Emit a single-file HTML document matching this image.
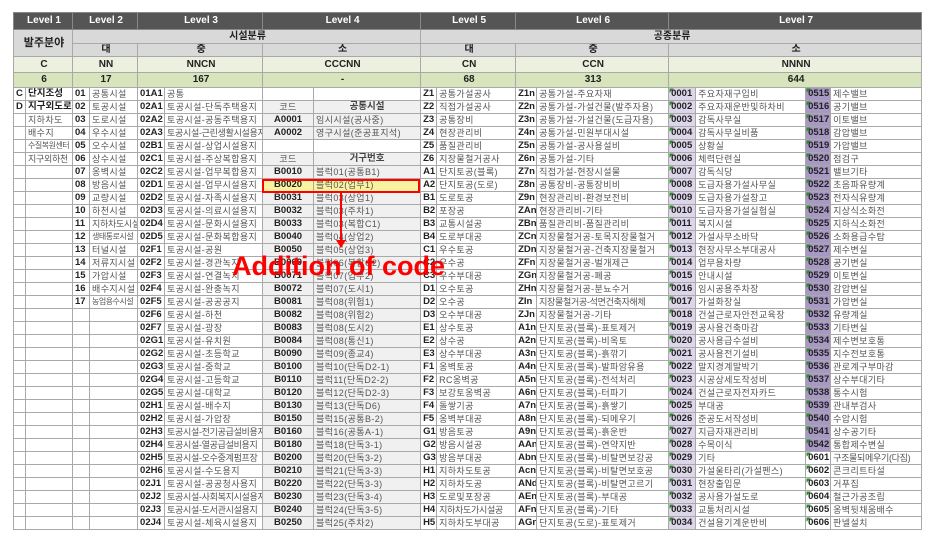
<!DOCTYPE html>
<html><head><meta charset="utf-8"><style>
body{margin:0;background:#fff;width:934px;height:536px;overflow:hidden;position:relative;font-family:"Liberation Sans","Noto Sans CJK KR","NanumGothic",sans-serif}
table{position:absolute;left:13px;top:12px;border-collapse:collapse;table-layout:fixed;width:908px}
td{border:1px solid #a9a9a9;padding:0 0 0 2px;height:12px;font-size:9px;line-height:12px;white-space:nowrap;overflow:hidden;color:#555;letter-spacing:0.4px}
td.c{font-weight:bold;color:#222;letter-spacing:0;font-size:9.5px}
.h td{background:#555;color:#fff;font-weight:bold;text-align:center;height:16px;font-size:10px;border-color:#888;letter-spacing:0}
.g td{background:#d9d9d9;color:#222;font-weight:bold;text-align:center;letter-spacing:0;font-size:10px}
.l td{background:#ebf1de;color:#222;font-weight:bold;text-align:center;height:15px;font-size:10px;letter-spacing:0}
.d td{background:#d7e4bc;color:#222;font-weight:bold;text-align:center;height:14px;font-size:10px;letter-spacing:0}
.L{border-left:1px solid #333!important}
.gy{background:#f0f0f0}
.p1{background:#ddd5ea linear-gradient(135deg,#2a8a2a 3px,transparent 3px)}
.p2{background:#a898c4 linear-gradient(135deg,#2a8a2a 3px,transparent 3px)}
.p0{background:#fff linear-gradient(135deg,#2a8a2a 3px,transparent 3px)}
.ct{text-align:center;padding:0}
.s{letter-spacing:-0.3px}
.bx{position:absolute;left:262px;top:179px;width:154px;height:10px;border:2px solid #f00}
.ar{position:absolute;left:340px;top:193px;width:2px;height:48px;background:#f00}
.ah{position:absolute;left:336px;top:240px;width:0;height:0;border-left:5px solid transparent;border-right:5px solid transparent;border-top:8px solid #f00}
.tx{position:absolute;left:232px;top:253px;font-size:27px;font-weight:bold;color:#f00;line-height:27px;letter-spacing:0}
</style></head><body>
<table>
<colgroup><col style="width:12px"><col style="width:47px"><col style="width:17px"><col style="width:48px"><col style="width:27px"><col style="width:98px"><col style="width:51px"><col style="width:107px"><col style="width:16px"><col style="width:79px"><col style="width:21px"><col style="width:132px"><col style="width:27px"><col style="width:110px"><col style="width:25px"><col style="width:91px"></colgroup>
<tr class="h"><td colspan="2">Level 1</td><td colspan="2">Level 2</td><td colspan="2">Level 3</td><td colspan="2">Level 4</td><td colspan="2">Level 5</td><td colspan="2">Level 6</td><td colspan="4">Level 7</td></tr>
<tr class="g"><td colspan="2" rowspan="2" style="font-size:11px">발주분야</td><td colspan="6" style="height:13px">시설분류</td><td colspan="8">공종분류</td></tr>
<tr class="g"><td colspan="2">대</td><td colspan="2">중</td><td colspan="2">소</td><td colspan="2">대</td><td colspan="2">중</td><td colspan="4">소</td></tr>
<tr class="l"><td colspan="2">C</td><td colspan="2">NN</td><td colspan="2">NNCN</td><td colspan="2">CCCNN</td><td colspan="2">CN</td><td colspan="2">CCN</td><td colspan="4">NNNN</td></tr>
<tr class="d"><td colspan="2">6</td><td colspan="2">17</td><td colspan="2">167</td><td colspan="2">-</td><td colspan="2">68</td><td colspan="2">313</td><td colspan="4">644</td></tr>
<tr><td class="c">C</td><td class="c">단지조성</td><td class="c L">01</td><td>공통시설</td><td class="c L">01A1</td><td>공통</td><td class="L"></td><td></td><td class="c L">Z1</td><td>공통가설공사</td><td class="c L">Z1n</td><td>공통가설-주요자재</td><td class="c L p1">0001</td><td>주요자재구입비</td><td class="c p2">0515</td><td>제수밸브</td></tr>
<tr><td class="c">D</td><td class="c">지구외도로</td><td class="c L">02</td><td>토공시설</td><td class="c L">02A1</td><td>토공시설-단독주택용지</td><td class="L gy ct">코드</td><td class="gy ct c" style="color:#444">공통시설</td><td class="c L">Z2</td><td>직접가설공사</td><td class="c L">Z2n</td><td>공통가설-가설건물(발주자용)</td><td class="c L p1">0002</td><td>주요자재운반및하차비</td><td class="c p2">0516</td><td>공기밸브</td></tr>
<tr><td></td><td>지하차도</td><td class="c L">03</td><td>도로시설</td><td class="c L">02A2</td><td>토공시설-공동주택용지</td><td class="L gy ct c">A0001</td><td class="gy">임시시설(공사중)</td><td class="c L">Z3</td><td>공통장비</td><td class="c L">Z3n</td><td>공통가설-가설건물(도급자용)</td><td class="c L p1">0003</td><td>감독사무실</td><td class="c p2">0517</td><td>이토밸브</td></tr>
<tr><td></td><td>배수지</td><td class="c L">04</td><td>우수시설</td><td class="c L">02A3</td><td class="s">토공시설-근린생활시설용지</td><td class="L gy ct c">A0002</td><td class="gy">영구시설(준공표지석)</td><td class="c L">Z4</td><td>현장관리비</td><td class="c L">Z4n</td><td>공통가설-민원부대시설</td><td class="c L p1">0004</td><td>감독사무실비품</td><td class="c p2">0518</td><td>감압밸브</td></tr>
<tr><td></td><td style="font-size:8px;letter-spacing:-0.5px">수질복원센터</td><td class="c L">05</td><td>오수시설</td><td class="c L">02B1</td><td>토공시설-상업시설용지</td><td class="L"></td><td></td><td class="c L">Z5</td><td>품질관리비</td><td class="c L">Z5n</td><td>공통가설-공사용설비</td><td class="c L p1">0005</td><td>상황실</td><td class="c p2">0519</td><td>가압밸브</td></tr>
<tr><td></td><td class="s">지구외하천</td><td class="c L">06</td><td>상수시설</td><td class="c L">02C1</td><td>토공시설-주상복합용지</td><td class="L gy ct">코드</td><td class="gy ct c" style="color:#444">거구번호</td><td class="c L">Z6</td><td>지장물철거공사</td><td class="c L">Z6n</td><td>공통가설-기타</td><td class="c L p1">0006</td><td>체력단련실</td><td class="c p2">0520</td><td>점검구</td></tr>
<tr><td></td><td></td><td class="c L">07</td><td>옹벽시설</td><td class="c L">02C2</td><td>토공시설-업무복합용지</td><td class="L gy ct c">B0010</td><td class="gy">블럭01(공통B1)</td><td class="c L">A1</td><td>단지토공(블록)</td><td class="c L">Z7n</td><td>직접가설-현장시설물</td><td class="c L p1">0007</td><td>감독식당</td><td class="c p2">0521</td><td>밸브기타</td></tr>
<tr><td></td><td></td><td class="c L">08</td><td>방음시설</td><td class="c L">02D1</td><td>토공시설-업무시설용지</td><td class="L ct c" style="background:#f7f3a0">B0020</td><td style="background:#f7f3a0">블럭02(업무1)</td><td class="c L">A2</td><td>단지토공(도로)</td><td class="c L">Z8n</td><td>공통장비-공통장비비</td><td class="c L p1">0008</td><td>도급자용가설사무실</td><td class="c p2">0522</td><td>초음파유량계</td></tr>
<tr><td></td><td></td><td class="c L">09</td><td>교량시설</td><td class="c L">02D2</td><td>토공시설-자족시설용지</td><td class="L gy ct c">B0031</td><td class="gy">블럭03(상업1)</td><td class="c L">B1</td><td>도로토공</td><td class="c L">Z9n</td><td>현장관리비-환경보전비</td><td class="c L p1">0009</td><td>도급자용가설창고</td><td class="c p2">0523</td><td>전자식유량계</td></tr>
<tr><td></td><td></td><td class="c L">10</td><td>하천시설</td><td class="c L">02D3</td><td>토공시설-의료시설용지</td><td class="L gy ct c">B0032</td><td class="gy">블럭03(주차1)</td><td class="c L">B2</td><td>포장공</td><td class="c L">ZAn</td><td>현장관리비-기타</td><td class="c L p1">0010</td><td>도급자용가설실험실</td><td class="c p2">0524</td><td>지상식소화전</td></tr>
<tr><td></td><td></td><td class="c L">11</td><td class="s">지하차도시설</td><td class="c L">02D4</td><td>토공시설-문화시설용지</td><td class="L gy ct c">B0033</td><td class="gy">블럭03(복합C1)</td><td class="c L">B3</td><td>교통시설공</td><td class="c L">ZBn</td><td>품질관리비-품질관리비</td><td class="c L p1">0011</td><td>복지시설</td><td class="c p2">0525</td><td>지하식소화전</td></tr>
<tr><td></td><td></td><td class="c L">12</td><td style="font-size:8px;letter-spacing:-0.5px">생태통로시설</td><td class="c L">02D5</td><td>토공시설-문화복합용지</td><td class="L gy ct c">B0040</td><td class="gy">블럭04(상업2)</td><td class="c L">B4</td><td>도로부대공</td><td class="c L">ZCn</td><td>지장물철거공-토목지장물철거</td><td class="c L p1">0012</td><td>가설사무소바닥</td><td class="c p2">0526</td><td>소화용급수탑</td></tr>
<tr><td></td><td></td><td class="c L">13</td><td>터널시설</td><td class="c L">02F1</td><td>토공시설-공원</td><td class="L gy ct c">B0050</td><td class="gy">블럭05(상업3)</td><td class="c L">C1</td><td>우수토공</td><td class="c L">ZDn</td><td>지장물철거공-건축지장물철거</td><td class="c L p1">0013</td><td>현장사무소부대공사</td><td class="c p2">0527</td><td>제수변실</td></tr>
<tr><td></td><td></td><td class="c L">14</td><td>저류지시설</td><td class="c L">02F2</td><td>토공시설-경관녹지</td><td class="L gy ct c">B0060</td><td class="gy">블럭06(복합C2)</td><td class="c L">C2</td><td>우수공</td><td class="c L">ZFn</td><td>지장물철거공-벌개제근</td><td class="c L p1">0014</td><td>업무용차량</td><td class="c p2">0528</td><td>공기변실</td></tr>
<tr><td></td><td></td><td class="c L">15</td><td>가압시설</td><td class="c L">02F3</td><td>토공시설-연결녹지</td><td class="L gy ct c">B0071</td><td class="gy">블럭07(업무2)</td><td class="c L">C3</td><td>우수부대공</td><td class="c L">ZGn</td><td>지장물철거공-폐공</td><td class="c L p1">0015</td><td>안내시설</td><td class="c p2">0529</td><td>이토변실</td></tr>
<tr><td></td><td></td><td class="c L">16</td><td>배수지시설</td><td class="c L">02F4</td><td>토공시설-완충녹지</td><td class="L gy ct c">B0072</td><td class="gy">블럭07(도시1)</td><td class="c L">D1</td><td>오수토공</td><td class="c L">ZHn</td><td>지장물철거공-분뇨수거</td><td class="c L p1">0016</td><td>임시공용주차장</td><td class="c p2">0530</td><td>감압변실</td></tr>
<tr><td></td><td></td><td class="c L">17</td><td style="font-size:8px;letter-spacing:-0.5px">농업용수시설</td><td class="c L">02F5</td><td>토공시설-공공공지</td><td class="L gy ct c">B0081</td><td class="gy">블럭08(위험1)</td><td class="c L">D2</td><td>오수공</td><td class="c L">ZIn</td><td class="s">지장물철거공-석면건축자해체</td><td class="c L p1">0017</td><td>가설화장실</td><td class="c p2">0531</td><td>가압변실</td></tr>
<tr><td></td><td></td><td class="L"></td><td></td><td class="c L">02F6</td><td>토공시설-하천</td><td class="L gy ct c">B0082</td><td class="gy">블럭08(위험2)</td><td class="c L">D3</td><td>오수부대공</td><td class="c L">ZJn</td><td>지장물철거공-기타</td><td class="c L p1">0018</td><td>건설근로자안전교육장</td><td class="c p2">0532</td><td>유량계실</td></tr>
<tr><td></td><td></td><td class="L"></td><td></td><td class="c L">02F7</td><td>토공시설-광장</td><td class="L gy ct c">B0083</td><td class="gy">블럭08(도시2)</td><td class="c L">E1</td><td>상수토공</td><td class="c L">A1n</td><td>단지토공(블록)-표토제거</td><td class="c L p1">0019</td><td>공사용건축마감</td><td class="c p2">0533</td><td>기타변실</td></tr>
<tr><td></td><td></td><td class="L"></td><td></td><td class="c L">02G1</td><td>토공시설-유치원</td><td class="L gy ct c">B0084</td><td class="gy">블럭08(통신1)</td><td class="c L">E2</td><td>상수공</td><td class="c L">A2n</td><td>단지토공(블록)-비옥토</td><td class="c L p1">0020</td><td>공사용급수설비</td><td class="c p2">0534</td><td>제수변보호통</td></tr>
<tr><td></td><td></td><td class="L"></td><td></td><td class="c L">02G2</td><td>토공시설-초등학교</td><td class="L gy ct c">B0090</td><td class="gy">블럭09(종교4)</td><td class="c L">E3</td><td>상수부대공</td><td class="c L">A3n</td><td>단지토공(블록)-흙깎기</td><td class="c L p1">0021</td><td>공사용전기설비</td><td class="c p2">0535</td><td>지수전보호통</td></tr>
<tr><td></td><td></td><td class="L"></td><td></td><td class="c L">02G3</td><td>토공시설-중학교</td><td class="L gy ct c">B0100</td><td class="gy">블럭10(단독D2-1)</td><td class="c L">F1</td><td>옹벽토공</td><td class="c L">A4n</td><td>단지토공(블록)-발파암유용</td><td class="c L p1">0022</td><td>말지경계말박기</td><td class="c p2">0536</td><td>관로계구부마감</td></tr>
<tr><td></td><td></td><td class="L"></td><td></td><td class="c L">02G4</td><td>토공시설-고등학교</td><td class="L gy ct c">B0110</td><td class="gy">블럭11(단독D2-2)</td><td class="c L">F2</td><td>RC옹벽공</td><td class="c L">A5n</td><td>단지토공(블록)-전석처리</td><td class="c L p1">0023</td><td>시공상세도작성비</td><td class="c p2">0537</td><td>상수부대기타</td></tr>
<tr><td></td><td></td><td class="L"></td><td></td><td class="c L">02G5</td><td>토공시설-대학교</td><td class="L gy ct c">B0120</td><td class="gy">블럭12(단독D2-3)</td><td class="c L">F3</td><td>보강토옹벽공</td><td class="c L">A6n</td><td>단지토공(블록)-터파기</td><td class="c L p1">0024</td><td>건설근로자전자카드</td><td class="c p2">0538</td><td>통수시험</td></tr>
<tr><td></td><td></td><td class="L"></td><td></td><td class="c L">02H1</td><td>토공시설-배수지</td><td class="L gy ct c">B0130</td><td class="gy">블럭13(단독D6)</td><td class="c L">F4</td><td>돌쌓기공</td><td class="c L">A7n</td><td>단지토공(블록)-흙쌓기</td><td class="c L p1">0025</td><td>부대공</td><td class="c p2">0539</td><td>관내부검사</td></tr>
<tr><td></td><td></td><td class="L"></td><td></td><td class="c L">02H2</td><td>토공시설-가압장</td><td class="L gy ct c">B0150</td><td class="gy">블럭15(공통B-2)</td><td class="c L">F5</td><td>옹벽부대공</td><td class="c L">A8n</td><td>단지토공(블록)-되메우기</td><td class="c L p1">0026</td><td>준공도서작성비</td><td class="c p2">0540</td><td>수압시험</td></tr>
<tr><td></td><td></td><td class="L"></td><td></td><td class="c L">02H3</td><td class="s">토공시설-전기공급설비용지</td><td class="L gy ct c">B0160</td><td class="gy">블럭16(공통A-1)</td><td class="c L">G1</td><td>방음토공</td><td class="c L">A9n</td><td>단지토공(블록)-흙운반</td><td class="c L p1">0027</td><td>지급자재관리비</td><td class="c p2">0541</td><td>상수공기타</td></tr>
<tr><td></td><td></td><td class="L"></td><td></td><td class="c L">02H4</td><td class="s">토공시설-열공급설비용지</td><td class="L gy ct c">B0180</td><td class="gy">블럭18(단독3-1)</td><td class="c L">G2</td><td>방음시설공</td><td class="c L">AAn</td><td>단지토공(블록)-연약지반</td><td class="c L p1">0028</td><td>수목이식</td><td class="c p2">0542</td><td>통합제수변실</td></tr>
<tr><td></td><td></td><td class="L"></td><td></td><td class="c L">02H5</td><td class="s">토공시설-오수중계펌프장</td><td class="L gy ct c">B0200</td><td class="gy">블럭20(단독3-2)</td><td class="c L">G3</td><td>방음부대공</td><td class="c L">Abn</td><td>단지토공(블록)-비탈면보강공</td><td class="c L p1">0029</td><td>기타</td><td class="c p0">0601</td><td class="s">구조물되메우기(다짐)</td></tr>
<tr><td></td><td></td><td class="L"></td><td></td><td class="c L">02H6</td><td>토공시설-수도용지</td><td class="L gy ct c">B0210</td><td class="gy">블럭21(단독3-3)</td><td class="c L">H1</td><td>지하차도토공</td><td class="c L">Acn</td><td>단지토공(블록)-비탈면보호공</td><td class="c L p1">0030</td><td>가설울타리(가설펜스)</td><td class="c p0">0602</td><td>콘크리트타설</td></tr>
<tr><td></td><td></td><td class="L"></td><td></td><td class="c L">02J1</td><td>토공시설-공공청사용지</td><td class="L gy ct c">B0220</td><td class="gy">블럭22(단독3-3)</td><td class="c L">H2</td><td>지하차도공</td><td class="c L">ANd</td><td>단지토공(블록)-비탈면고르기</td><td class="c L p1">0031</td><td>현장출입문</td><td class="c p0">0603</td><td>거푸집</td></tr>
<tr><td></td><td></td><td class="L"></td><td></td><td class="c L">02J2</td><td class="s">토공시설-사회복지시설용지</td><td class="L gy ct c">B0230</td><td class="gy">블럭23(단독3-4)</td><td class="c L">H3</td><td>도로및포장공</td><td class="c L">AEn</td><td>단지토공(블록)-부대공</td><td class="c L p1">0032</td><td>공사용가설도로</td><td class="c p0">0604</td><td>철근가공조립</td></tr>
<tr><td></td><td></td><td class="L"></td><td></td><td class="c L">02J3</td><td class="s">토공시설-도서관시설용지</td><td class="L gy ct c">B0240</td><td class="gy">블럭24(단독3-5)</td><td class="c L">H4</td><td class="s">지하차도가시설공</td><td class="c L">AFn</td><td>단지토공(블록)-기타</td><td class="c L p1">0033</td><td>교통처리시설</td><td class="c p0">0605</td><td>옹벽뒷채움배수</td></tr>
<tr><td></td><td></td><td class="L"></td><td></td><td class="c L">02J4</td><td>토공시설-체육시설용지</td><td class="L gy ct c">B0250</td><td class="gy">블럭25(주차2)</td><td class="c L">H5</td><td>지하차도부대공</td><td class="c L">AGn</td><td>단지토공(도로)-표토제거</td><td class="c L p1">0034</td><td>건설용기계운반비</td><td class="c p0">0606</td><td>판넬설치</td></tr>
</table>
<div class="bx"></div>
<div class="ar"></div>
<div class="ah"></div>
<div class="tx">Addition of code</div>
</body></html>
